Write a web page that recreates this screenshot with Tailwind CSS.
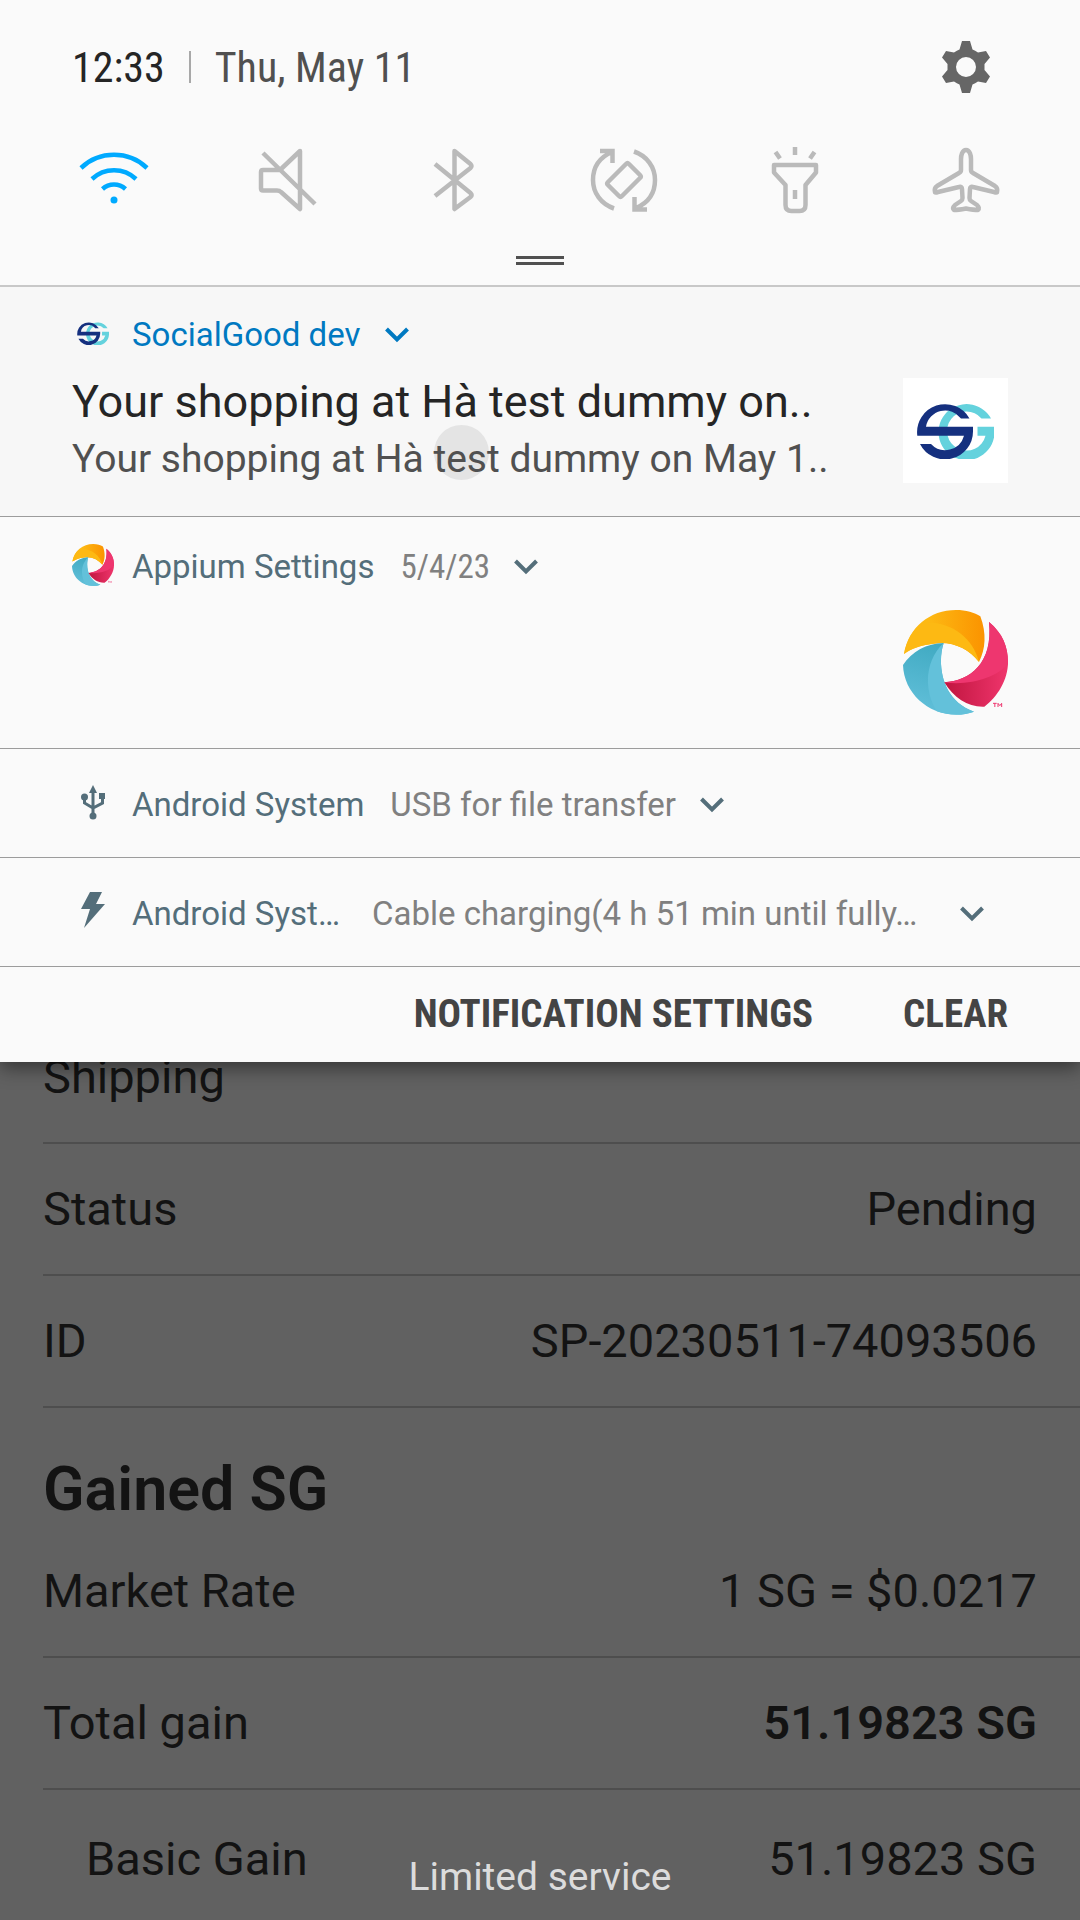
<!DOCTYPE html>
<html lang="en">
<head>
<meta charset="utf-8">
<meta name="viewport" content="width=device-width, initial-scale=1">
<title>Notifications</title>
<script src="https://cdn.jsdelivr.net/npm/@tailwindcss/browser@4"></script>
</head>
<body class="relative min-h-screen overflow-x-hidden bg-[#616161] font-['Roboto',sans-serif]">

<!-- Shared icon definitions -->
<svg class="absolute h-0 w-0" aria-hidden="true">
  <defs>
    <linearGradient id="amber" x1="0" x2="1"><stop offset="0.3" stop-color="#fdb913"/><stop offset="1" stop-color="#fb9300"/></linearGradient>
    <linearGradient id="teal" x1="0.6" y1="0" x2="0.3" y2="1"><stop offset="0" stop-color="#3fa9c1"/><stop offset="1" stop-color="#62c0da"/></linearGradient>
    <linearGradient id="crimson" x1="0" x2="1"><stop offset="0" stop-color="#c0153f"/><stop offset="1" stop-color="#ef356c"/></linearGradient>
  </defs>
  <symbol id="sg" viewBox="14 24 77 56">
    <path fill="#64d2dd" d="M88 39.5A28 28 0 1 0 91.500 52V47.700H74.500V56.700H82.500A19.500 19.500 0 1 1 78.500 39.500Z"/>
    <path fill="#15307f" d="M14.300 56.700A28 28 0 0 1 66.500 39.500H58A19.500 19.500 0 0 0 23 47.700H70V52A28 28 0 0 1 17 65H28A19.500 19.500 0 0 0 61 56.700Z"/>
  </symbol>
  <symbol id="appium" viewBox="69 60 315 315">
    <path fill="url(#amber)" d="M72 192C85 112 150 60 228 60C258 60 284 68 301 79C320 130 317 178 297 216C265 175 215 152 160 161C120 166 95 175 72 192Z"/>
    <path fill="#fdb913" d="M72 192C80 150 100 115 130 98C205 90 280 140 297 216C265 175 215 152 160 161C120 166 95 175 72 192Z"/>
    <path fill="url(#teal)" d="M69 225C95 185 140 160 191 159C172 215 180 330 282 365C175 400 72 325 69 225Z"/>
    <path fill="#63c1da" d="M191 159C172 215 180 330 282 365C250 378 205 377 170 364C130 300 135 210 191 159Z"/>
    <path fill="url(#crimson)" d="M193 277C270 272 340 220 327 96C368 130 384 170 384 217C384 270 352 322 313 350C265 352 222 325 193 277Z"/>
    <path fill="#ee366f" d="M193 277C270 272 340 220 327 96C368 130 384 170 384 217V222C350 262 270 288 193 277Z"/>
    <path fill="none" stroke="#ee366f" stroke-width="3" d="M339 340H350M344.500 340V351M354 351V340L359.500 347L365 340V351"/>
  </symbol>
  <symbol id="chevron" viewBox="0 0 24 16">
    <path fill="none" stroke="currentColor" stroke-width="4" d="M1.500 2L12 12.500L22.500 2"/>
  </symbol>
</svg>

<section aria-label="Notification shade" class="relative z-10 bg-[#fafafa] shadow-[0_6px_18px_rgba(0,0,0,0.45)]">
  <header class="flex h-[287px] flex-col border-b-2 border-[#c8c8c8] px-[72px]">
    <div class="mt-8 flex h-[70px] items-center text-[42px] font-['Roboto_Condensed','Roboto',sans-serif]">
      <time class="text-[#252525]">12:33</time>
      <span class="mr-6 ml-6 h-8 w-0.5 bg-[#a8a8a8]"></span>
      <span class="text-[#505050]">Thu, May 11</span>
      <button type="button" aria-label="Settings" class="mr-[14px] ml-auto">
        <svg class="h-[56px] w-[56px]" viewBox="-28 -28 56 56"><path fill="#666" fill-rule="evenodd" d="M-4 -26H4L6.500 -17.500Q9 -16.500 12 -14.500L20 -16L24 -9.500L18.500 -3V3L24 9.500L20 16L12 14.500Q9 16.500 6.500 17.500L4 26H-4L-6.500 17.500Q-9 16.500 -12 14.500L-20 16L-24 9.500L-18.500 3V-3L-24 -9.500L-20 -16L-12 -14.500Q-9 -16.500 -6.500 -17.500ZM0 -10A10 10 0 1 0 0 10A10 10 0 1 0 0 -10Z"/></svg>
      </button>
    </div>
    <div class="mt-[38px] flex justify-between text-[#bababa]">
      <button type="button" aria-label="Wi-Fi" class="text-[#00aaff]">
        <svg class="h-20 w-[84px]" viewBox="-2 0 84 80" fill="none" stroke="currentColor" stroke-width="4.500"><path d="M7 28A48 48 0 0 1 73 28M18 39A32 32 0 0 1 62 39M28.500 49A17 17 0 0 1 51.500 49"/><circle cx="40" cy="60" r="3.500" fill="currentColor" stroke="none"/></svg>
      </button>
      <button type="button" aria-label="Sound muted">
        <svg class="h-20 w-[84px]" viewBox="-2 0 84 80" fill="none" stroke="currentColor" stroke-width="4.500" stroke-linejoin="round"><path d="M56 11L36 30H19Q17 30 17 32V48.500Q17 50.500 19 50.500H33Q35.500 50.500 37 52L56 69ZM19 13L71 64"/></svg>
      </button>
      <button type="button" aria-label="Bluetooth">
        <svg class="h-20 w-[84px]" viewBox="-2 0 84 80" fill="none" stroke="currentColor" stroke-width="4.500" stroke-linejoin="round"><path d="M20 24L55.500 53Q57.500 55 55.500 57L39.500 69V11L55.500 24Q57.500 26 55.500 28L20 56"/></svg>
      </button>
      <button type="button" aria-label="Auto rotate">
        <svg class="h-20 w-[84px]" viewBox="-2 0 84 80" fill="none" stroke="currentColor" stroke-width="4.500"><path d="M15 11H27.500V23M27 12C13 18 8 28 8 40C8 53 16 64 29 68.500M49 11.500C62 16 70 27 70 40C70 52 65 62 51 68M62 69.500H49.500V57"/><path stroke-linejoin="round" d="M41 24Q42.500 22.500 44 24L55 35Q56.500 36.500 55 38L37 56Q35.500 57.500 34 56L23 45Q21.500 43.500 23 42Z"/></svg>
      </button>
      <button type="button" aria-label="Flashlight">
        <svg class="h-20 w-[84px]" viewBox="-2 0 84 80" fill="none" stroke="currentColor" stroke-width="4.500" stroke-linejoin="round"><path d="M18 25H60V32.500L49.500 45V65Q49.500 71 43.500 71H35.500Q29.500 71 29.500 65V45L18 32.500ZM39 7V15M39 50V59M19.500 12L24 18.500M58.500 12L54 18.500"/></svg>
      </button>
      <button type="button" aria-label="Airplane mode">
        <svg class="h-20 w-[84px]" viewBox="-2 0 84 80" fill="none" stroke="currentColor" stroke-width="4.500" stroke-linejoin="round"><path d="M40 10C36 10 35 16 35 19V30Q35 32 33 33L11 46Q8 48 9 52Q9 53 12 52L33 47Q36 46 36 49L36.500 58Q36.500 60 35 61L29 65Q26 68 28 70Q32 70 40 68.500Q48 70 52 70Q54 68 51 65L45 61Q43.500 60 43.500 58L44 49Q44 46 47 47L68 52Q71 53 71 52Q72 48 69 46L47 33Q45 32 45 30V19C45 16 44 10 40 10Z"/></svg>
      </button>
    </div>
    <div class="mx-auto mt-[36px] h-[9px] w-12 border-y-[3px] border-[#505050]"></div>
  </header>

  <ul>
    <li class="h-[230px] border-b border-[#9c9c9c] bg-[#f7f7f7] px-[72px] pt-[26px]">
      <div class="flex h-11 items-center text-[33px] text-[#0079c1]">
        <svg class="mr-[23px] mb-1 ml-[5px] h-[23px] w-8"><use href="#sg"/></svg>
        <span>SocialGood dev</span>
        <button type="button" aria-label="Expand SocialGood dev" class="ml-6"><svg class="h-4 w-6"><use href="#chevron"/></svg></button>
      </div>
      <div class="flex justify-between pt-[21px]">
        <div class="relative">
          <span class="absolute top-[47px] left-[362px] h-[55px] w-[55px] rounded-full bg-[#e4e4e4]"></span>
          <h2 class="text-[45px] leading-[48px] text-[#252525]">Your shopping at Hà test dummy on..</h2>
          <p class="relative text-[39px] leading-[66px] text-[#505050]">Your shopping at Hà test dummy on May 1..</p>
        </div>
        <div class="flex h-[105px] w-[105px] items-center justify-center bg-white"><svg class="h-[56px] w-[77px]"><use href="#sg"/></svg></div>
      </div>
    </li>
    <li class="h-[232px] border-b border-[#9c9c9c] px-[72px] pt-7">
      <div class="flex h-11 items-center text-[33px] text-[#546e7a]">
        <svg class="mr-[18px] mb-1 h-[42px] w-[42px] shrink-0"><use href="#appium"/></svg>
        <span>Appium Settings</span>
        <span class="ml-[26px] text-[#808080] font-['Roboto_Condensed','Roboto',sans-serif]">5/4/23</span>
        <button type="button" aria-label="Expand Appium Settings" class="ml-6"><svg class="h-4 w-6"><use href="#chevron"/></svg></button>
      </div>
      <svg class="mt-[21px] ml-auto h-[105px] w-[105px]"><use href="#appium"/></svg>
    </li>
    <li class="flex h-[109px] items-center border-b border-[#9c9c9c] px-[72px] pt-1 text-[33px] text-[#546e7a]">
      <svg class="mr-[18px] mb-1 h-[42px] w-[42px]" viewBox="0 0 42 42"><path fill="none" stroke="currentColor" stroke-width="3" d="M21 8V34M12.500 14V21L21 26L30.500 21V14"/><path fill="currentColor" d="M21 3L25 11H17ZM27 11H33V17H27Z"/><circle cx="12.500" cy="15" r="3.500" fill="currentColor"/><circle cx="21" cy="34" r="3.500" fill="currentColor"/></svg>
      <span>Android System</span>
      <span class="ml-[26px] text-[#808080]">USB for file transfer</span>
      <button type="button" aria-label="Expand USB for file transfer" class="ml-6"><svg class="h-4 w-6"><use href="#chevron"/></svg></button>
    </li>
    <li class="flex h-[109px] items-center border-b border-[#9c9c9c] px-[72px] pt-1 text-[33px] text-[#546e7a]">
      <svg class="mr-[18px] mb-1 h-[42px] w-[42px]" viewBox="0 0 42 42"><path fill="currentColor" d="M18 1H30L24 13H33L12 37L18 18H9Z"/></svg>
      <span>Android Syst…</span>
      <span class="ml-8 text-[#808080]">Cable charging(4 h 51 min until fully…</span>
      <button type="button" aria-label="Expand cable charging" class="mr-6 ml-auto"><svg class="h-4 w-6"><use href="#chevron"/></svg></button>
    </li>
  </ul>

  <div class="flex h-[95px] items-center justify-end gap-[90px] px-[72px] text-[39px] font-bold text-[#444] font-['Roboto_Condensed','Roboto',sans-serif]">
    <button type="button">NOTIFICATION SETTINGS</button>
    <button type="button">CLEAR</button>
  </div>
</section>

<main class="-mt-[50px] pl-[43px] text-[47px] text-[#131313]">
  <dl>
    <div class="flex h-[132px] items-center justify-between border-b-2 border-[#4e4e4e] pr-[43px]"><dt>Shipping</dt><dd></dd></div>
    <div class="flex h-[132px] items-center justify-between border-b-2 border-[#4e4e4e] pr-[43px]"><dt>Status</dt><dd>Pending</dd></div>
    <div class="flex h-[132px] items-center justify-between border-b-2 border-[#4e4e4e] pr-[43px]"><dt>ID</dt><dd>SP-20230511-74093506</dd></div>
  </dl>
  <h2 class="pt-[44px] text-[61px] leading-[74px] font-semibold">Gained SG</h2>
  <dl>
    <div class="flex h-[132px] items-center justify-between border-b-2 border-[#4e4e4e] pr-[43px]"><dt>Market Rate</dt><dd>1 SG = $0.0217</dd></div>
    <div class="flex h-[132px] items-center justify-between border-b-2 border-[#4e4e4e] pr-[43px]"><dt>Total gain</dt><dd class="font-semibold">51.19823 SG</dd></div>
    <div class="flex h-[130px] items-center justify-between pt-2 pr-[43px] pl-[43px]"><dt>Basic Gain</dt><dd>51.19823 SG</dd></div>
  </dl>
</main>

<p class="absolute bottom-5 w-full text-center text-[39px] leading-[46px] text-[#dcdcdc]">Limited service</p>
</body>
</html>
